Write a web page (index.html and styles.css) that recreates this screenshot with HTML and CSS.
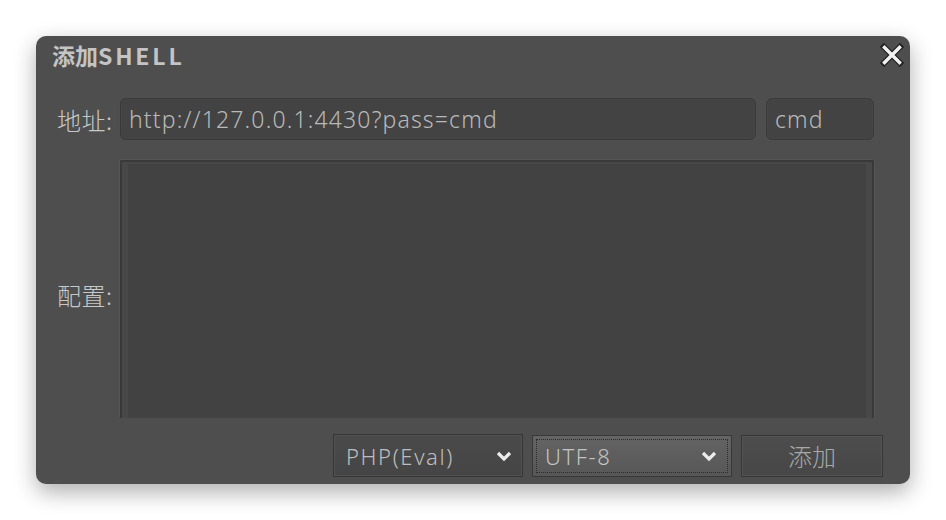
FILE: index.html
```html
<!DOCTYPE html>
<html lang="zh">
<head>
<meta charset="utf-8">
<title>添加SHELL</title>
<link rel="stylesheet" href="styles.css">
</head>
<body>
<div class="dialog">
  <div class="titlebar">
    <span class="title">添加<span class="title-latin">SHELL</span></span>
    <span class="close">
      <svg width="24" height="24" viewBox="0 0 24 24">
        <path d="M4 4 L20 20 M20 4 L4 20" stroke="#222" stroke-width="6" stroke-linecap="square"/>
        <path d="M4.5 4.5 L19.5 19.5 M19.5 4.5 L4.5 19.5" stroke="#f2f2f2" stroke-width="3.4" stroke-linecap="square"/>
      </svg>
    </span>
  </div>
  <div class="form">
    <div class="row">
      <label class="label">地址:</label>
      <div class="input url">http://127.0.0.1:4430?pass=cmd</div>
      <div class="input pass">cmd</div>
    </div>
    <div class="row area-row">
      <label class="label">配置:</label>
      <div class="area">
        <div class="area-inner"></div>
      </div>
    </div>
  </div>
  <div class="actions">
    <div class="select">
      <span>PHP(Eval)</span>
      <svg class="chev" width="16" height="12" viewBox="0 0 16 12"><path d="M2 3 L8 9 L14 3" fill="none" stroke="#ececec" stroke-width="3.2"/></svg>
    </div>
    <div class="select focused">
      <span>UTF-8</span>
      <svg class="chev" width="16" height="12" viewBox="0 0 16 12"><path d="M2 3 L8 9 L14 3" fill="none" stroke="#ececec" stroke-width="3.2"/></svg>
    </div>
    <div class="button">添加</div>
  </div>
</div>
</body>
</html>
```

FILE: styles.css
```css
html, body {
  margin: 0;
  padding: 0;
  background: #ffffff;
}
body {
  width: 946px;
  height: 520px;
  overflow: hidden;
  font-family: "Noto Sans", "Noto Sans CJK SC", sans-serif;
}
.dialog {
  margin: 36px 0 0 36px;
  width: 874px;
  height: 448px;
  box-sizing: border-box;
  border-radius: 10px;
  background: #4e4e4e;
  box-shadow: 0 8px 22px rgba(0, 0, 0, 0.32);
  display: flex;
  flex-direction: column;
  overflow: hidden;
}
.titlebar {
  height: 38px;
  display: flex;
  align-items: center;
  justify-content: space-between;
  padding: 0 6px 0 16px;
}
.title {
  font-family: "Noto Sans CJK SC", sans-serif;
  font-weight: 700;
  font-size: 23px;
  color: #c4c4c4;
}
.title-latin {
  letter-spacing: 2.8px;
}
.close {
  display: flex;
  width: 24px;
  height: 24px;
}
.form {
  padding: 24px 36px 0 21px;
  display: flex;
  flex-direction: column;
  gap: 20px;
}
.row {
  display: flex;
  align-items: center;
}
.label {
  width: 63px;
  font-family: "Noto Sans CJK SC", sans-serif;
  font-size: 24px;
  font-weight: 300;
  color: #c8c8c8;
  flex: none;
  letter-spacing: 0.5px;
}
.input {
  height: 42px;
  box-sizing: border-box;
  background: #434343;
  border: 1px solid #383838;
  box-shadow: 0 0 0 1px #505050, inset 0 0 0 1px #474747;
  border-radius: 6px;
  font-size: 23px;
  font-weight: 300;
  letter-spacing: 1.15px;
  color: #b9b9b9;
  display: flex;
  align-items: center;
  padding: 0 0 0 8px;
}
.url {
  width: 636px;
}
.pass {
  width: 108px;
  margin-left: 10px;
}
.area-row {
  height: 258px;
  align-items: center;
}
.area-row .label {
  padding-top: 10px;
}
.area {
  width: 754px;
  height: 258px;
  box-sizing: border-box;
  border: 2px solid #393939;
  border-bottom: none;
  box-shadow: -1px -1px 0 #565656, 1px 0 0 #565656;
  background: #484848;
  padding: 2px 6px 0 6px;
  border-radius: 2px 2px 0 0;
}
.area-inner {
  height: 100%;
  background: #424242;
}
.actions {
  display: flex;
  justify-content: flex-end;
  align-items: center;
  padding: 16px 27px 0 0;
  gap: 8px;
}
.select {
  width: 190px;
  height: 43px;
  box-sizing: border-box;
  border: 1px solid #353535;
  background: linear-gradient(#4a4a4a, #454545);
  box-shadow: inset 0 0 0 1px #525252;
  display: flex;
  align-items: center;
  justify-content: space-between;
  padding: 0 10px 0 12px;
  font-size: 22px;
  font-weight: 300;
  letter-spacing: 1.6px;
  color: #bdbdbd;
  margin-right: 1px;
}
.select.focused {
  width: 200px;
  height: 42px;
  background: linear-gradient(#646464, #575757);
  box-shadow: none;
  border: 1px solid #383838;
  outline: 1px dotted #2c2c2c;
  outline-offset: -5px;
  padding: 0 14px 0 12px;
  color: #c4c4c4;
}
.chev {
  flex: none;
}
.button {
  width: 142px;
  height: 42px;
  box-sizing: border-box;
  border: 1px solid #363636;
  background: linear-gradient(#4d4d4d, #474747);
  box-shadow: inset 0 0 0 1px #545454;
  display: flex;
  align-items: center;
  justify-content: center;
  font-family: "Noto Sans CJK SC", sans-serif;
  font-size: 24px;
  font-weight: 300;
  color: #a8a8a8;
}
```
